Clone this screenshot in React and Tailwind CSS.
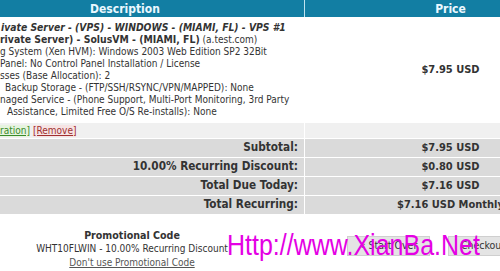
import React from 'react';

const rows = [
  { label: 'Subtotal:', value: '$7.95 USD' },
  { label: '10.00% Recurring Discount:', value: '$0.80 USD' },
  { label: 'Total Due Today:', value: '$7.16 USD' },
  { label: 'Total Recurring:', value: '$7.16 USD Monthly' },
];

export default function App() {
  return (
    <div className="relative w-[500px] h-[271px] overflow-hidden bg-white text-[#333] font-['DejaVu_Sans_Condensed','DejaVu_Sans',sans-serif]">
      {/* cart table, cropped on both sides */}
      <div className="-ml-[54px] w-[650px]">
        <div className="flex h-[17px] bg-[#127ea3] text-[12px] font-bold text-[#eaf8ff]">
          <div className="w-[359px] border-r border-[#bfe3ef] flex items-center justify-center">Description</div>
          <div className="flex-1 flex items-center justify-center">Price</div>
        </div>

        {/* product row */}
        <div className="flex">
          <div className="w-[359px] pl-[54px] pt-[4px] pb-[5px] text-[10px] leading-[12px] whitespace-nowrap overflow-hidden">
            <div className="pl-px font-bold italic text-[10.3px]">ivate Server - (VPS) - WINDOWS - (MIAMI, FL) - VPS #1</div>
            <div><span className="font-bold text-[10.4px]">rivate Server) - SolusVM - (MIAMI, FL)</span> (a.test.com)</div>
            <div>g System (Xen HVM): Windows 2003 Web Edition SP2 32Bit</div>
            <div>Panel: No Control Panel Installation / License</div>
            <div>sses (Base Allocation): 2</div>
            <div className="pl-[5px]">Backup Storage - (FTP/SSH/RSYNC/VPN/MAPPED): None</div>
            <div>naged Service - (Phone Support, Multi-Port Monitoring, 3rd Party</div>
            <div className="pl-[7px]">Assistance, Limited Free O/S Re-installs): None</div>
          </div>
          <div className="flex-1 flex items-center justify-center text-[11px] font-bold">$7.95 USD</div>
        </div>

        {/* edit / remove links */}
        <div className="flex h-[15px] bg-[#f0f0f0]">
          <div className="w-[359px] pl-[54px] border-r border-white flex items-center text-[10px] leading-[12px]">
            <span className="underline text-[#3a8a2a] bg-[#e6f4df]">ration]</span>
            <span className="ml-[3px] underline text-[#a03030] bg-[#f6e4e4]">[Remove]</span>
          </div>
          <div className="flex-1" />
        </div>

        {/* totals */}
        {rows.map((r) => (
          <div key={r.label} className="flex h-[18px] mt-px bg-[#dadada] font-bold">
            <div className="w-[359px] pr-[6px] border-r border-white flex items-center justify-end text-[11.7px]">{r.label}</div>
            <div className="flex-1 flex items-center justify-center whitespace-nowrap text-[11px]">{r.value}</div>
          </div>
        ))}

        {/* promo + buttons */}
        <div className="flex">
          <div className="w-[372px] pt-[14px] text-center text-[10px] leading-[14px]">
            <div className="font-bold text-[10.6px]">Promotional Code</div>
            <div>WHT10FLWIN - 10.00% Recurring Discount</div>
            <div className="underline text-[#555]">Don't use Promotional Code</div>
          </div>
          <div className="flex-1 pt-[22px] pl-[29px] flex gap-[18px] items-start">
            <button className="h-[20px] w-[83px] bg-[#e4e4e4] border border-[#cfcfcf] text-[10.5px] text-[#333]">« Start Over</button>
            <button className="h-[20px] w-[70px] bg-[#e4e4e4] border border-[#cfcfcf] text-[10.5px] text-[#333]">Checkout</button>
          </div>
        </div>
      </div>

      {/* watermark */}
      <div className="absolute left-[227px] top-[232px] whitespace-nowrap text-[25px] leading-none text-[#e400e4] font-['Liberation_Sans',Arial,sans-serif] scale-y-[1.2]">
        Http://www.XianBa.Net
      </div>
    </div>
  );
}
